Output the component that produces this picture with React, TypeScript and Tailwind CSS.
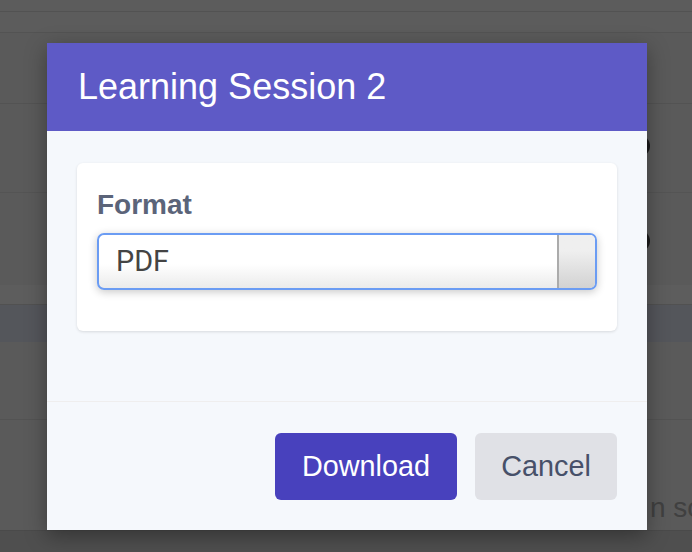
import React from "react";

const sans = { fontFamily: '"Liberation Sans", Arial, sans-serif' };
const roboto = { fontFamily: 'Roboto, "Liberation Sans", sans-serif' };

function BackgroundPage() {
  return (
    <div className="flex h-[552px] w-[692px] flex-col overflow-hidden bg-[#5a5a5a]">
      <div className="h-[12px] shrink-0 border-b border-[#525252] bg-[#5c5c5c]" />
      <div className="h-[21px] shrink-0 border-b border-[#535353] bg-[#5c5c5c]" />
      <div className="h-[71px] shrink-0 border-b border-[#535353]" />
      <div className="relative h-[89px] shrink-0 border-b border-[#545454]">
        <div className="absolute left-[628px] top-[31px] h-[22px] w-[22px] rounded-full bg-[#1c1c1c]" />
      </div>
      <div className="relative h-[92px] shrink-0">
        <div className="absolute left-[628px] top-[37px] h-[22px] w-[22px] rounded-full bg-[#1c1c1c]" />
      </div>
      <div className="h-[20px] shrink-0 border-b border-[#515151] bg-[#5d5d5d]" />
      <div className="h-[37px] shrink-0 bg-[#54565b]" />
      <div className="h-[78px] shrink-0 border-b border-[#535353]" />
      <div className="flex h-[110px] shrink-0 items-end pb-[8px]">
        <span
          className="ml-[650px] whitespace-nowrap text-[28px] leading-none text-[#404040]"
          style={sans}
        >
          n so
        </span>
      </div>
      <div className="flex-1 border-t border-[#4a4a4a] bg-[#4f4f4f]" />
    </div>
  );
}

function FormatSelect() {
  return (
    <div className="flex h-[57px] w-[500px] overflow-hidden rounded-[7px] border-2 border-[#6b9cf3] bg-gradient-to-b from-white from-55% to-[#ebebeb] shadow-[0_2px_8px_rgba(0,0,0,0.22)]">
      <div className="flex flex-1 items-center pl-[17px]">
        <span className="text-[28.8px] leading-none text-[#444444]" style={roboto}>
          PDF
        </span>
      </div>
      <div className="w-[38px] border-l-2 border-[#ababab] bg-gradient-to-b from-[#efefef] from-30% to-[#d2d2d2]" />
    </div>
  );
}

export default function App() {
  return (
    <div className="relative h-[552px] w-[692px] overflow-hidden">
      <BackgroundPage />

      <div className="absolute left-[47px] top-[43px] w-[600px] bg-[#f5f8fc] shadow-[0_6px_20px_rgba(0,0,0,0.35)]">
        <div className="flex h-[88px] items-center bg-[#5e5ac6] pl-[31px]">
          <h1 className="text-[36px] leading-none text-white" style={sans}>
            Learning Session 2
          </h1>
        </div>

        <div className="px-[30px] pb-[70px] pt-[32px]">
          <div className="rounded-[6px] bg-white px-[20px] pb-[41px] pt-[28px] shadow-[0_1px_3px_rgba(0,0,0,0.12)]">
            <div
              className="mb-[14px] text-[28px] font-bold leading-[28px] text-[#5b6479]"
              style={sans}
            >
              Format
            </div>
            <FormatSelect />
          </div>
        </div>

        <div className="flex justify-end gap-[18px] border-t border-[#efeeee] px-[30px] pb-[30px] pt-[31px]">
          <button
            className="h-[67px] w-[182px] rounded-[6px] bg-[#4841bd] text-[28.8px] leading-none text-white"
            style={sans}
          >
            Download
          </button>
          <button
            className="h-[67px] w-[142px] rounded-[6px] bg-[#e0e1e6] text-[28.8px] leading-none text-[#475069]"
            style={sans}
          >
            Cancel
          </button>
        </div>
      </div>
    </div>
  );
}
